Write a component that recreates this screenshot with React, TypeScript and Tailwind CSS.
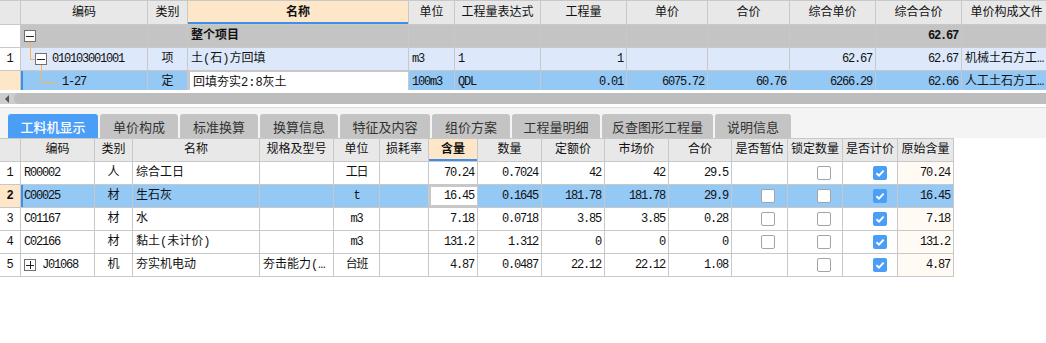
import { ReactNode } from "react";
import clsx from "clsx";

// column widths for the upper (清单) grid and the lower (工料机) grid
const tc = [
  "w-[21px]",
  "w-[127px]",
  "w-[40px]",
  "w-[221px]",
  "w-[46px]",
  "w-[86px]",
  "w-[86px]",
  "w-[81px]",
  "w-[82px]",
  "w-[86px]",
  "w-[86px]",
  "w-[90px]",
];

const bc = [
  "w-[21px]",
  "w-[74px]",
  "w-[38px]",
  "w-[127px]",
  "w-[74px]",
  "w-[46px]",
  "w-[49px]",
  "w-[49px]",
  "w-[64px]",
  "w-[63px]",
  "w-[64px]",
  "w-[63px]",
  "w-[56px]",
  "w-[55px]",
  "w-[55px]",
  "w-[56px]",
];

const topHeaders = ["", "编码", "类别", "名称", "单位", "工程量表达式", "工程量", "单价", "合价", "综合单价", "综合合价", "单价构成文件"];
const bottomHeaders = ["", "编码", "类别", "名称", "规格及型号", "单位", "损耗率", "含量", "数量", "定额价", "市场价", "合价", "是否暂估", "锁定数量", "是否计价", "原始含量"];

const tabs = [
  { label: "工料机显示", w: "w-[90px]" },
  { label: "单价构成", w: "w-[78px]" },
  { label: "标准换算", w: "w-[78px]" },
  { label: "换算信息", w: "w-[78px]" },
  { label: "特征及内容", w: "w-[90px]" },
  { label: "组价方案", w: "w-[78px]" },
  { label: "工程量明细", w: "w-[88px]" },
  { label: "反查图形工程量", w: "w-[111px]" },
  { label: "说明信息", w: "w-[76px]" },
];

type Item = {
  code: string;
  kind: string;
  name: string;
  spec: string;
  unit: string;
  qty: string;
  amount: string;
  quota: string;
  market: string;
  total: string;
  est: boolean;
  orig: string;
};

const items: Item[] = [
  { code: "R00002", kind: "人", name: "综合工日", spec: "", unit: "工日", qty: "70.24", amount: "0.7024", quota: "42", market: "42", total: "29.5", est: false, orig: "70.24" },
  { code: "C00025", kind: "材", name: "生石灰", spec: "", unit: "t", qty: "16.45", amount: "0.1645", quota: "181.78", market: "181.78", total: "29.9", est: true, orig: "16.45" },
  { code: "C01167", kind: "材", name: "水", spec: "", unit: "m3", qty: "7.18", amount: "0.0718", quota: "3.85", market: "3.85", total: "0.28", est: true, orig: "7.18" },
  { code: "C02166", kind: "材", name: "黏土(未计价)", spec: "", unit: "m3", qty: "131.2", amount: "1.312", quota: "0", market: "0", total: "0", est: true, orig: "131.2" },
  { code: "J01068", kind: "机", name: "夯实机电动", spec: "夯击能力(…", unit: "台班", qty: "4.87", amount: "0.0487", quota: "22.12", market: "22.12", total: "1.08", est: false, orig: "4.87" },
];

const C = ({ w, className, children }: { w: string; className?: string; children?: ReactNode }) => (
  <div
    className={clsx(
      w,
      "relative shrink-0 h-full flex items-center border-r border-[#c8c8c8] px-[3px] whitespace-nowrap overflow-hidden",
      className,
    )}
  >
    {children}
  </div>
);

const Num = ({ children, bold }: { children: ReactNode; bold?: boolean }) => (
  <span className={clsx("tracking-[-1.2px]", bold && "font-bold")}>{children}</span>
);

const Box = ({ plus, className }: { plus?: boolean; className?: string }) => (
  <span className={clsx("absolute w-[12px] h-[12px] border border-[#707070] bg-white flex items-center justify-center", className)}>
    <span className="w-[8px] h-px bg-[#222]" />
    {plus && <span className="absolute h-[8px] w-px bg-[#222]" />}
  </span>
);

const Line = ({ className }: { className: string }) => <span className={clsx("absolute bg-[#f5b54a]", className)} />;

const Check = ({ on }: { on: boolean }) =>
  on ? (
    <svg viewBox="0 0 14 14" className="w-[14px] h-[14px] ml-[27px]">
      <rect width="14" height="14" rx="2" fill="#4a9ef6" />
      <path d="M3.4 7.3 L6 9.7 L10.6 4.6" stroke="white" strokeWidth="2" fill="none" />
    </svg>
  ) : (
    <span className="w-[14px] h-[14px] ml-[26px] border border-[#a4a4a4] rounded-[2px] bg-white" />
  );

const HeaderCell = ({ w, label, active }: { w: string; label: string; active?: boolean }) => (
  <C w={w} className={clsx("justify-center", active ? "bg-[#fee6c9] font-bold" : "bg-[#e8e8e8]")}>
    {label}
    {active && <span className="absolute left-0 right-0 bottom-0 h-[2px] bg-[#3d8fe9]" />}
  </C>
);

const TopGrid = () => (
  <div className="h-[90px] overflow-hidden">
    <div className="flex h-[25px] border-y border-[#c8c8c8]">
      {topHeaders.map((h, i) => (
        <HeaderCell key={i} w={tc[i]} label={h} active={i === 3} />
      ))}
    </div>

    {/* 整个项目 */}
    <div className="flex h-[23px] border-b border-[#c8c8c8] bg-[#c4c4c4]">
      <C w={tc[0]} className="bg-white" />
      <C w={tc[1]}>
        <Box className="left-[3px] top-[5px]" />
        <Line className="left-[9px] top-[17px] bottom-0 w-px" />
      </C>
      <C w={tc[2]} />
      <C w={tc[3]} className="font-bold">整个项目</C>
      <C w={tc[4]} />
      <C w={tc[5]} />
      <C w={tc[6]} />
      <C w={tc[7]} />
      <C w={tc[8]} />
      <C w={tc[9]} />
      <C w={tc[10]} className="justify-end">
        <Num bold>62.67</Num>
      </C>
      <C w={tc[11]} />
    </div>

    {/* 清单 */}
    <div className="flex h-[23px] border-b border-[#c8c8c8] bg-[#dde9fb]">
      <C w={tc[0]} className="bg-white justify-center">1</C>
      <C w={tc[1]} className="pl-[31px]">
        <Line className="left-[9px] top-0 h-[12px] w-px" />
        <Line className="left-[9px] top-[11px] w-[5px] h-px" />
        <Box className="left-[14px] top-[5px]" />
        <Line className="left-[20px] top-[17px] bottom-0 w-px" />
        <Num>010103001001</Num>
      </C>
      <C w={tc[2]} className="justify-center">项</C>
      <C w={tc[3]}>土(石)方回填</C>
      <C w={tc[4]}><Num>m3</Num></C>
      <C w={tc[5]}><Num>1</Num></C>
      <C w={tc[6]} className="justify-end"><Num>1</Num></C>
      <C w={tc[7]} />
      <C w={tc[8]} />
      <C w={tc[9]} className="justify-end"><Num>62.67</Num></C>
      <C w={tc[10]} className="justify-end"><Num>62.67</Num></C>
      <C w={tc[11]} className="px-[2px]">机械土石方工…</C>
    </div>

    {/* 定额 */}
    <div className="flex h-[23px] border-b border-[#c8c8c8] bg-[#94c8f5]">
      <C w={tc[0]} className="bg-[#fee6c9]" />
      <C w={tc[1]} className="pl-[41px]">
        <span className="absolute left-0 top-0 bottom-0 w-[2px] bg-[#3d8fe9]" />
        <Line className="left-[20px] top-0 h-[12px] w-px" />
        <Line className="left-[20px] top-[11px] w-[16px] h-px" />
        <Num>1-27</Num>
      </C>
      <C w={tc[2]} className="justify-center">定</C>
      <C w={tc[3]} className="bg-white border-x-2 border-t border-[#747474]">回填夯实2:8灰土</C>
      <C w={tc[4]}><Num>100m3</Num></C>
      <C w={tc[5]}><Num>QDL</Num></C>
      <C w={tc[6]} className="justify-end"><Num>0.01</Num></C>
      <C w={tc[7]} className="justify-end"><Num>6075.72</Num></C>
      <C w={tc[8]} className="justify-end"><Num>60.76</Num></C>
      <C w={tc[9]} className="justify-end"><Num>6266.29</Num></C>
      <C w={tc[10]} className="justify-end"><Num>62.66</Num></C>
      <C w={tc[11]} className="px-[2px]">人工土石方工…</C>
    </div>
  </div>
);

const Scrollbar = () => (
  <>
    <div className="h-[3px] bg-white" />
    <div className="flex h-[11px] items-center bg-[#cdcdcd]">
      <div className="w-[14px] flex items-center justify-center">
        <span className="w-0 h-0 border-y-[4px] border-y-transparent border-r-[4px] border-r-[#555]" />
      </div>
      <div className="flex-1 h-full rounded-l-[5px] bg-[#bdbdbd]" />
    </div>
    <div className="h-[3px] bg-white" />
    <div className="h-px bg-[#dedede]" />
  </>
);

const Tabs = () => (
  <div className="h-[30px] bg-[#f4f4f4] pt-[6px] pl-[8px] flex gap-[2px] font-['Noto_Sans_CJK_SC',sans-serif] text-[13px]">
    {tabs.map((t, i) => (
      <div
        key={t.label}
        className={clsx(
          t.w,
          "h-[24px] rounded-t-[3px] flex items-center justify-center",
          i === 0 ? "bg-[#4a9ef6] text-white font-medium" : "bg-[#c4c4c4] text-[#333]",
        )}
      >
        {t.label}
      </div>
    ))}
  </div>
);

const BottomGrid = () => (
  <div className="w-[954px]">
    <div className="flex h-[24px] border-y border-[#c8c8c8]">
      {bottomHeaders.map((h, i) => (
        <HeaderCell key={i} w={bc[i]} label={h} active={i === 7} />
      ))}
    </div>
    {items.map((it, idx) => {
      const sel = idx === 1;
      return (
        <div key={it.code} className={clsx("flex h-[23px] border-b border-[#c8c8c8]", sel ? "bg-[#94c8f5]" : "bg-white")}>
          <C w={bc[0]} className={clsx("justify-center", sel ? "bg-[#fee6c9] font-bold" : "bg-white")}>
            {idx + 1}
          </C>
          <C w={bc[1]} className={idx === 4 ? "pl-[21px]" : ""}>
            {sel && <span className="absolute left-0 top-0 bottom-0 w-[2px] bg-[#3d8fe9]" />}
            {idx === 4 && <Box plus className="left-[3px] top-[5px]" />}
            <Num>{it.code}</Num>
          </C>
          <C w={bc[2]} className="justify-center">{it.kind}</C>
          <C w={bc[3]}>{it.name}</C>
          <C w={bc[4]} className="px-[2px]">{it.spec}</C>
          <C w={bc[5]} className="justify-center"><Num>{it.unit}</Num></C>
          <C w={bc[6]} />
          <C w={bc[7]} className={clsx("justify-end", sel && "bg-white border-2 border-[#747474]")}>
            <Num>{it.qty}</Num>
          </C>
          <C w={bc[8]} className="justify-end"><Num>{it.amount}</Num></C>
          <C w={bc[9]} className="justify-end"><Num>{it.quota}</Num></C>
          <C w={bc[10]} className="justify-end"><Num>{it.market}</Num></C>
          <C w={bc[11]} className="justify-end"><Num>{it.total}</Num></C>
          <C w={bc[12]} className="px-0">{it.est && <Check on={false} />}</C>
          <C w={bc[13]} className="px-0"><Check on={false} /></C>
          <C w={bc[14]} className="px-0"><Check on /></C>
          <C w={bc[15]} className={clsx("justify-end", !sel && "bg-[#fffaf4]")}>
            <Num>{it.orig}</Num>
          </C>
        </div>
      );
    })}
  </div>
);

const App = () => (
  <div className="w-[1046px] h-[343px] overflow-hidden bg-white text-[12px] leading-none text-[#111] font-['Liberation_Mono','Noto_Sans_CJK_SC',monospace]">
    <TopGrid />
    <Scrollbar />
    <Tabs />
    <BottomGrid />
  </div>
);

export default App;
